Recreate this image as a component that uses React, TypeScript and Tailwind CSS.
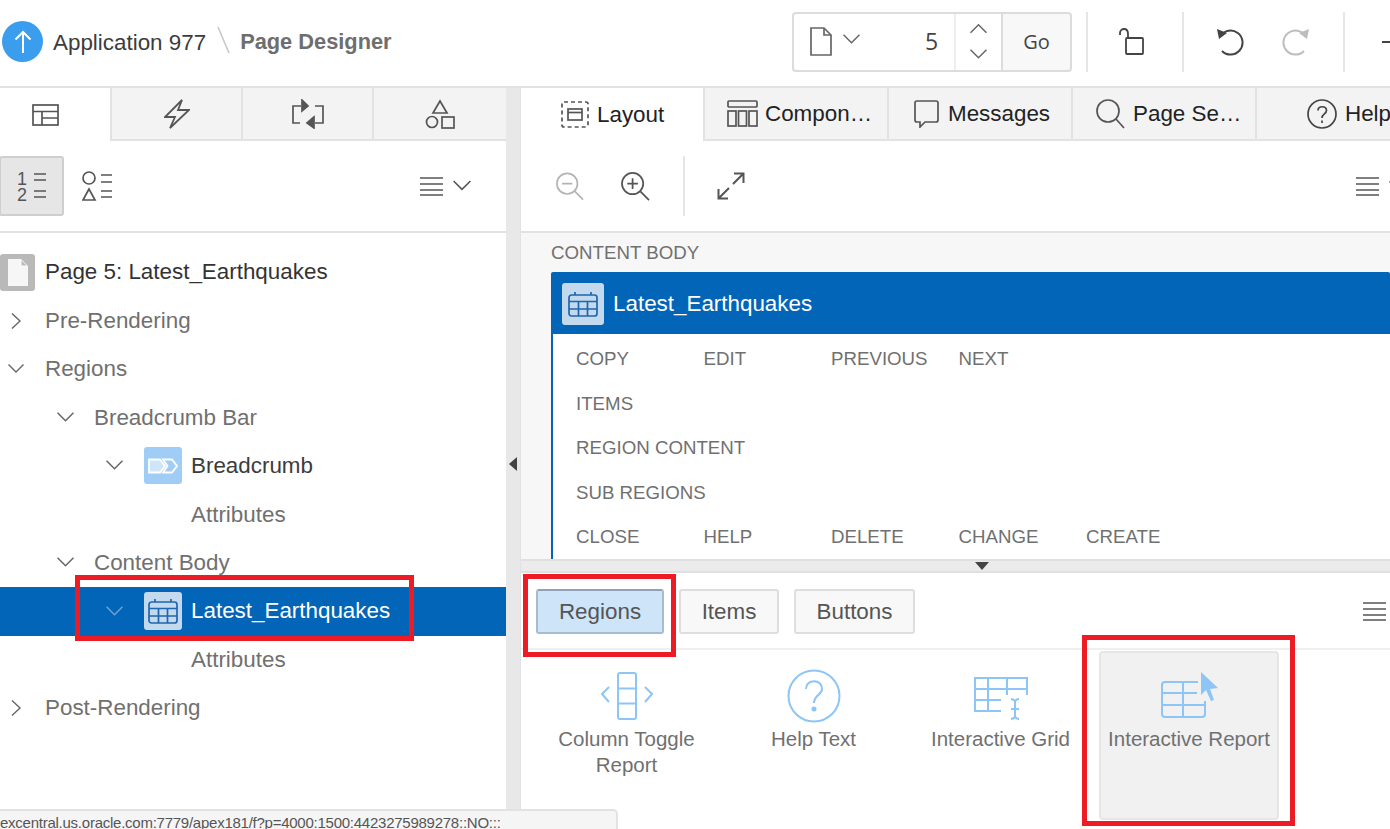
import React from 'react';

const Chev = ({ dir = 'down', c = '#666', s = 16, w = 1.4 }: { dir?: 'down' | 'up' | 'right'; c?: string; s?: number; w?: number }) => {
  const d = dir === 'down' ? 'M0.5 3.5 L8 11 L15.5 3.5' : dir === 'up' ? 'M0.5 11 L8 3.5 L15.5 11' : 'M4 0.5 L12 8 L4 15.5';
  return (
    <svg width={s} height={s} viewBox="0 0 16 16" fill="none" stroke={c} strokeWidth={w} className="block shrink-0">
      <path d={d} />
    </svg>
  );
};

const Burger = ({ w = 23 }: { w?: number }) => (
  <svg width={w} height="19" viewBox={`0 0 ${w} 19`} stroke="#555" strokeWidth="1.6" className="block shrink-0">
    <path d={`M0 1H${w}M0 7H${w}M0 13H${w}M0 18H${w}`} />
  </svg>
);

const CalendarGlyph = () => (
  <svg width="32" height="26" viewBox="0 0 32 26" fill="none" stroke="#1f65b0" strokeWidth="1.7">
    <rect x="2" y="4" width="28" height="21" rx="2.5" />
    <path d="M2 10.5H30M2 18H30M11.5 10.5V25M20.5 10.5V25M8 1V4M24 1V4" />
  </svg>
);

const BreadcrumbIcon = () => (
  <div className="flex h-[37px] w-[38px] shrink-0 items-center justify-center rounded-[3px] bg-[#9fcdf5]">
    <svg width="30" height="16" viewBox="0 0 30 16" fill="none" stroke="#fff" strokeWidth="1.8">
      <path d="M1 1.5H12L17 8L12 14.5H1Z" fill="#cfe6fa" />
      <path d="M15 1.5H24L29 8L24 14.5H15L19.5 8Z" />
    </svg>
  </div>
);

const PageGlyph = () => (
  <div className="flex h-[37px] w-[35px] shrink-0 items-center justify-center rounded-[3px] bg-[#b9b9b9]">
    <svg width="20" height="27" viewBox="0 0 20 27">
      <path d="M0 0H13L20 7V27H0Z" fill="#f6f6f6" />
      <path d="M13 1V7H19" fill="#b9b9b9" stroke="#fff" strokeWidth="1" />
    </svg>
  </div>
);

function TreeRow({
  indent,
  chev,
  chevW = 37,
  chevS = 16,
  icon,
  text,
  dark,
  selected,
}: {
  indent: number;
  chev?: 'down' | 'right';
  chevW?: number;
  chevS?: number;
  icon?: React.ReactNode;
  text: string;
  dark?: boolean;
  selected?: boolean;
}) {
  return (
    <div className={`flex h-[48.45px] items-center ${selected ? 'bg-[#0365b8] text-white' : dark ? 'text-[#3c3c3c]' : 'text-[#707070]'}`} style={{ paddingLeft: indent }}>
      <span className="flex shrink-0 items-center" style={{ width: chevW }}>
        {chev ? <Chev dir={chev} c={selected ? '#6fa3d4' : '#666'} s={chevS} /> : null}
      </span>
      {icon ? <span className="mr-[9px] block shrink-0">{icon}</span> : null}
      <span className="whitespace-nowrap">{text}</span>
    </div>
  );
}

const LeftTab = ({ w, active, children }: { w: string; active?: boolean; children: React.ReactNode }) => (
  <div className={`flex h-[53px] shrink-0 items-center justify-center border-[#e2e2e2] ${w} ${active ? 'border-r-2 bg-white' : 'border-b-2 border-r-2 bg-[#f3f3f3]'}`}>{children}</div>
);

const RightTab = ({ w, active, icon, label }: { w: string; active?: boolean; icon: React.ReactNode; label: string }) => (
  <div className={`flex h-[53px] shrink-0 items-center gap-[9px] border-r-2 border-[#e2e2e2] text-[#222] ${w} ${active ? 'bg-white' : 'border-b-2 bg-[#f3f3f3]'}`}>
    {icon}
    <span className="whitespace-nowrap">{label}</span>
  </div>
);

const Cell = ({ t }: { t: string }) => <span className="w-[127.5px] shrink-0 whitespace-nowrap">{t}</span>;
const LayoutRow = ({ items }: { items: string[] }) => (
  <div className="flex h-[44.5px] items-center">
    {items.map((t) => (
      <Cell key={t} t={t} />
    ))}
  </div>
);

const GalleryItem = ({ icon, label, w, extra = '' }: { icon: React.ReactNode; label: React.ReactNode; w: string; extra?: string }) => (
  <div className={`flex shrink-0 flex-col items-center ${w} ${extra}`}>
    <div className="flex h-[75px] items-end pb-[1px]">{icon}</div>
    <div className="mt-[1px] text-center leading-[26px] text-[#707070]">{label}</div>
  </div>
);

const RedBox = ({ cls }: { cls: string }) => <div className={`pointer-events-none absolute border-[5px] border-[#ed1c24] ${cls}`} />;

export default function App() {
  return (
    <div className="relative h-[829px] w-[1390px] overflow-hidden bg-white font-['Liberation_Sans',Arial,sans-serif] text-[22.4px]">
      {/* Header */}
      <header className="flex h-[88px] items-center border-b-2 border-[#e2e2e2] bg-white pb-[3px]">
        <div className="flex w-[792px] shrink-0 items-center">
          <div className="ml-[2px] flex h-[41px] w-[41px] shrink-0 items-center justify-center rounded-full bg-[#3a9dee]">
            <svg width="20" height="24" viewBox="0 0 20 24" fill="none" stroke="#fff" strokeWidth="2">
              <path d="M10 23V2M2.5 9.5L10 2L17.5 9.5" />
            </svg>
          </div>
          <span className="ml-[10px] mt-[2px] whitespace-nowrap text-[#3c3c3c]">Application 977</span>
          <svg width="14" height="28" viewBox="0 0 14 28" className="ml-[11px] mb-[3px] shrink-0" stroke="#c8c8c8" strokeWidth="1.6">
            <path d="M1 1L12 27" />
          </svg>
          <span className="ml-[9px] mt-[2px] whitespace-nowrap text-[21.8px] font-bold text-[#6e6e6e]">Page Designer</span>
        </div>

        <div className="flex h-[60px] w-[280px] shrink-0 items-stretch">
          <div className="flex w-[209px] items-center rounded-l-[4px] border-2 border-r-0 border-[#dcdcdc] bg-white">
            <svg width="22" height="29" viewBox="0 0 22 29" fill="none" stroke="#666" strokeWidth="1.7" className="ml-[16px] shrink-0">
              <path d="M1 1H14L21 8V28H1Z" />
              <path d="M14 1V8H21" />
            </svg>
            <span className="ml-[11px] mb-[4px]"><Chev c="#666" s={17} /></span>
            <span className="ml-[65px] font-['Open_Sans',sans-serif] text-[23px] text-[#444]">5</span>
            <div className="ml-[16px] flex h-full w-[46px] flex-col items-center justify-center gap-[8px] border-l-2 border-[#eeeeee]">
              <Chev dir="up" c="#666" s={17} />
              <Chev c="#666" s={17} />
            </div>
          </div>
          <div className="flex w-[71px] items-center justify-center rounded-r-[4px] border-2 border-[#dcdcdc] bg-[#f8f8f8] font-['Open_Sans',sans-serif] text-[20px] text-[#444]">Go</div>
        </div>

        <div className="ml-[14px] h-[60px] w-[2px] shrink-0 bg-[#e6e6e6]" />
        <svg width="26" height="27" viewBox="0 0 26 27" fill="none" stroke="#444" strokeWidth="1.8" className="ml-[31px] shrink-0">
          <path d="M1 7V5C1 2.5 3 1 5 1C7.5 1 9 3 9 6V9" />
          <rect x="7" y="10" width="17" height="16" rx="1" />
        </svg>
        <div className="ml-[37px] h-[60px] w-[2px] shrink-0 bg-[#e6e6e6]" />
        <svg width="28" height="28" viewBox="0 0 28 28" fill="none" stroke="#444" strokeWidth="2" className="ml-[32px] shrink-0">
          <path d="M4.5 8A12 12 0 1 1 6 23" />
          <path d="M1 1L11 5L3 11Z" fill="#444" stroke="none" />
        </svg>
        <svg width="28" height="28" viewBox="0 0 28 28" fill="none" stroke="#bdbdbd" strokeWidth="2" className="ml-[38px] shrink-0">
          <path d="M23.5 8A12 12 0 1 0 22 23" />
          <path d="M27 1L17 5L25 11Z" fill="#bdbdbd" stroke="none" />
        </svg>
        <div className="ml-[33px] h-[60px] w-[2px] shrink-0 bg-[#e6e6e6]" />
        <div className="ml-[37px] h-[2px] w-[8px] shrink-0 bg-[#444]" />
      </header>

      <div className="flex h-[741px]">
        {/* Left panel */}
        <aside className="flex w-[506px] shrink-0 flex-col">
          <div className="flex">
            <LeftTab w="w-[112px] pr-[19px]" active>
              <svg width="27" height="22" viewBox="0 0 27 22" fill="none" stroke="#555" strokeWidth="1.7">
                <rect x="1" y="1" width="25" height="20" />
                <path d="M1 7.5H26M10 7.5V21M10 14H26" />
              </svg>
            </LeftTab>
            <LeftTab w="w-[131px]">
              <svg width="26" height="30" viewBox="0 0 26 30" fill="none" stroke="#555" strokeWidth="1.8" strokeLinejoin="miter">
                <path d="M18 1L1 18H11L6 29L25 11H14Z" />
              </svg>
            </LeftTab>
            <LeftTab w="w-[131px]">
              <svg width="32" height="30" viewBox="0 0 32 30" fill="none" stroke="#555" strokeWidth="1.7">
                <path d="M9 7H1V24H8M23 7H31V24H23" />
                <path d="M10 1L16 7L10 12Z" fill="#555" />
                <path d="M22 18L15 24L22 29Z" fill="#555" />
              </svg>
            </LeftTab>
            <LeftTab w="w-[132px] !border-r-0">
              <svg width="30" height="30" viewBox="0 0 30 30" fill="none" stroke="#555" strokeWidth="1.7">
                <path d="M15 2L22 14H8Z" />
                <circle cx="7" cy="23" r="5.5" />
                <rect x="17" y="18" width="12" height="11" />
              </svg>
            </LeftTab>
          </div>

          <div className="flex h-[92px] items-center border-b-2 border-[#e2e2e2]">
            <div className="ml-[-1px] flex h-[60px] w-[65px] shrink-0 items-center justify-center rounded-[3px] border-2 border-[#cfcfcf] bg-[#e6e6e6]">
              <svg width="30" height="31" viewBox="0 0 30 31" fill="#555" stroke="#555" strokeWidth="1.6">
                <text x="0" y="14" fontSize="18" stroke="none">1</text>
                <text x="0" y="30" fontSize="18" stroke="none">2</text>
                <path d="M17 3H29M17 9H29M17 20H29M17 26H29" fill="none" />
              </svg>
            </div>
            <svg width="31" height="30" viewBox="0 0 31 30" fill="none" stroke="#555" strokeWidth="1.7" className="ml-[18px] shrink-0">
              <circle cx="7" cy="7" r="6" />
              <path d="M7 18L1 29H13Z" />
              <path d="M19 4H30M19 11H30M19 20H30M19 26H30" />
            </svg>
            <span className="ml-[307px] block"><Burger /></span>
            <span className="ml-[10px] block"><Chev c="#555" s={18} /></span>
          </div>

          <div className="flex-1 pt-[15px]">
            <div className="flex h-[48.45px] items-center text-[#333]">
              <PageGlyph />
              <span className="ml-[10px] whitespace-nowrap">Page 5: Latest_Earthquakes</span>
            </div>
            <TreeRow indent={8} chev="right" text="Pre-Rendering" />
            <TreeRow indent={8} chev="down" text="Regions" />
            <TreeRow indent={57} chev="down" chevS={17} text="Breadcrumb Bar" />
            <TreeRow indent={106} chev="down" chevS={17} chevW={38} icon={<BreadcrumbIcon />} text="Breadcrumb" dark />
            <TreeRow indent={154} text="Attributes" />
            <TreeRow indent={57} chev="down" chevS={17} text="Content Body" />
            <TreeRow
              indent={106}
              chev="down"
              chevS={17}
              chevW={38}
              icon={
                <div className="flex h-[38px] w-[38px] shrink-0 items-center justify-center rounded-[3px] bg-[#c3d9ee]">
                  <CalendarGlyph />
                </div>
              }
              text="Latest_Earthquakes"
              selected
            />
            <TreeRow indent={154} text="Attributes" />
            <TreeRow indent={8} chev="right" text="Post-Rendering" />
          </div>
        </aside>

        {/* Vertical splitter */}
        <div className="flex w-[14px] shrink-0 items-start justify-center bg-[#e8e8e8] pt-[369px]">
          <div className="h-0 w-0 border-y-[7px] border-r-[8px] border-y-transparent border-r-[#444]" />
        </div>

        {/* Right panel */}
        <main className="flex min-w-0 flex-1 flex-col border-l border-[#e2e2e2]">
          <div className="flex">
            <RightTab
              w="w-[184px] !gap-[8px] pl-[40px]"
              active
              label="Layout"
              icon={
                <svg width="28" height="27" viewBox="0 0 28 27" fill="none" stroke="#555" strokeWidth="1.7" className="shrink-0">
                  <rect x="1" y="1" width="26" height="25" rx="2" strokeDasharray="4 3" />
                  <rect x="7" y="8" width="14" height="11" />
                  <path d="M7 11.5H21" />
                </svg>
              }
            />
            <RightTab
              w="w-[184px] !gap-[7px] pl-[22px]"
              label="Compon…"
              icon={
                <svg width="31" height="27" viewBox="0 0 31 27" fill="none" stroke="#555" strokeWidth="1.7" className="shrink-0">
                  <rect x="1" y="1" width="29" height="6" rx="1" />
                  <rect x="1" y="11" width="8" height="15" />
                  <rect x="11.5" y="11" width="8" height="15" />
                  <rect x="22" y="11" width="8" height="15" />
                </svg>
              }
            />
            <RightTab
              w="w-[184px] pl-[25px]"
              label="Messages"
              icon={
                <svg width="25" height="28" viewBox="0 0 25 28" fill="none" stroke="#555" strokeWidth="1.7" className="shrink-0">
                  <path d="M3 1H22C23 1 24 2 24 3V20C24 21 23 22 22 22H11L6 27V22H3C2 22 1 21 1 20V3C1 2 2 1 3 1Z" />
                </svg>
              }
            />
            <RightTab
              w="w-[184px] !gap-[8px] pl-[23px]"
              label="Page Se…"
              icon={
                <svg width="29" height="30" viewBox="0 0 29 30" fill="none" stroke="#555" strokeWidth="1.7" className="shrink-0">
                  <circle cx="12" cy="12" r="11" />
                  <path d="M20 20L28 29" />
                </svg>
              }
            />
            <div className="flex h-[53px] flex-1 items-center gap-[8px] overflow-hidden border-b-2 border-[#e2e2e2] bg-[#f3f3f3] pl-[50px] text-[#222]">
              <svg width="30" height="30" viewBox="0 0 30 30" fill="none" stroke="#444" strokeWidth="1.7" className="shrink-0">
                <circle cx="15" cy="15" r="14" />
                <path d="M11 11.5C11 6.5 19.5 6.5 19.5 11.5C19.5 15 15 15 15 19" />
                <path d="M15 21.5V24" />
              </svg>
              <span className="whitespace-nowrap">Help</span>
            </div>
          </div>

          <div className="flex h-[92px] shrink-0 items-center border-b-2 border-[#e2e2e2]">
            <svg width="28" height="29" viewBox="0 0 30 30" fill="none" stroke="#b4b4b4" strokeWidth="1.8" className="ml-[35px] shrink-0">
              <circle cx="12" cy="12" r="11" />
              <path d="M6.5 12H17.5M20 20L29 29" />
            </svg>
            <svg width="29" height="29" viewBox="0 0 30 30" fill="none" stroke="#555" strokeWidth="1.8" className="ml-[37px] shrink-0">
              <circle cx="12" cy="12" r="11" />
              <path d="M6.5 12H17.5M12 6.5V17.5M20 20L29 29" />
            </svg>
            <div className="ml-[33px] h-[60px] w-[2px] shrink-0 bg-[#e6e6e6]" />
            <svg width="28" height="28" viewBox="0 0 28 28" fill="none" stroke="#555" strokeWidth="2" className="ml-[32px] shrink-0">
              <path d="M17 1.5H26.5V11M26.5 1.5L16 12M1.5 17V26.5H11M1.5 26.5L12 16" />
            </svg>
            <span className="ml-[611px] block"><Burger /></span>
            <span className="ml-[10px] block"><Chev c="#555" s={16} /></span>
          </div>

          {/* Layout canvas */}
          <div className="flex h-[326px] shrink-0 flex-col overflow-hidden bg-[#f7f7f7] pl-[30px]">
            <div className="flex h-[39px] shrink-0 items-center pt-[1px] text-[18.7px] text-[#707070]">CONTENT BODY</div>
            <div className="flex h-[62px] shrink-0 items-center rounded-t-[2px] bg-[#0365b8] pl-[11px] pt-[2px] text-white">
              <div className="flex h-[42px] w-[42px] shrink-0 items-center justify-center rounded-[3px] bg-[#c3d9ee]">
                <CalendarGlyph />
              </div>
              <span className="ml-[9px] whitespace-nowrap">Latest_Earthquakes</span>
            </div>
            <div className="min-h-0 flex-1 border-l-2 border-[#0365b8] bg-white pl-[23px] pt-[3px] text-[18.7px] text-[#707070]">
              <LayoutRow items={['COPY', 'EDIT', 'PREVIOUS', 'NEXT']} />
              <LayoutRow items={['ITEMS']} />
              <LayoutRow items={['REGION CONTENT']} />
              <LayoutRow items={['SUB REGIONS']} />
              <LayoutRow items={['CLOSE', 'HELP', 'DELETE', 'CHANGE', 'CREATE']} />
            </div>
          </div>

          {/* Horizontal splitter */}
          <div className="flex h-[14px] shrink-0 justify-center border-y-2 border-[#e0e0e0] bg-[#ebebeb] pl-[52px] pt-[1px]">
            <div className="h-0 w-0 border-x-[7.5px] border-t-[8px] border-x-transparent border-t-[#444]" />
          </div>

          {/* Gallery tabs */}
          <div className="flex h-[77px] shrink-0 items-start border-b-2 border-[#f0f0f0] pl-[15px] pt-[16px] text-[#555]">
            <div className="flex h-[45px] w-[128px] shrink-0 items-center justify-center rounded-[3px] border-2 border-[#a9bccd] border-t-[#8ea2b5] bg-[#cde4f9]">Regions</div>
            <div className="ml-[15px] flex h-[45px] w-[100px] shrink-0 items-center justify-center rounded-[3px] border-2 border-[#dedede] bg-[#f8f8f8]">Items</div>
            <div className="ml-[15px] flex h-[45px] w-[121px] shrink-0 items-center justify-center rounded-[3px] border-2 border-[#dedede] bg-[#f8f8f8]">Buttons</div>
            <span className="ml-[448px] mt-[13px] block"><Burger /></span>
          </div>

          {/* Gallery */}
          <div className="flex flex-1 items-start pl-[12px] text-[20.5px]">
            <GalleryItem
              w="w-[187px]"
              label={<>Column Toggle<br />Report</>}
              icon={
                <svg width="54" height="48" viewBox="0 0 54 48" fill="none" stroke="#8cc5f6" strokeWidth="2" className="mb-[4px]">
                  <rect x="18" y="1" width="18" height="46" rx="2" />
                  <path d="M18 16.5H36M18 31.5H36M9 15L2 22L9 30M45 15L52 22L45 30" />
                </svg>
              }
            />
            <GalleryItem
              w="w-[187px]"
              label="Help Text"
              icon={
                <svg width="54" height="54" viewBox="0 0 54 54" fill="none" stroke="#8cc5f6" strokeWidth="2" className="mb-[1px]">
                  <circle cx="27" cy="27" r="25.5" />
                  <path d="M19 20C19 9.5 35 9.5 35 20C35 26 27 26 27 34" />
                  <circle cx="27" cy="40" r="1.5" fill="#8cc5f6" />
                </svg>
              }
            />
            <GalleryItem
              w="w-[187px]"
              label="Interactive Grid"
              icon={
                <svg width="54" height="44" viewBox="0 0 54 44" fill="none" stroke="#8cc5f6" strokeWidth="2" className="mb-[4px]">
                  <path d="M27 35H1V2H53V19M1 13H53M1 24H27M14 2V35M33 2V19" />
                  <path d="M37 23C39 23 40 24 41 25C42 24 43 23 45 23M41 25V41M37 33H45M37 43C39 43 40 42 41 41C42 42 43 43 45 43" />
                </svg>
              }
            />
            <div className="ml-[5px] mt-[1px] h-[169px] w-[180px] shrink-0 rounded-[4px] border-2 border-[#e6e6e6] bg-[#f1f1f1]">
              <GalleryItem
                w="w-full"
                extra="mt-[-3px]"
                label="Interactive Report"
                icon={
                  <svg width="58" height="48" viewBox="0 0 58 48" fill="none" stroke="#8cc5f6" strokeWidth="2" className="ml-[2px] mb-[5px]">
                    <path d="M37 11H4C2 11 1 12 1 14V43C1 45 2 46 4 46H41C43 46 44 45 44 43V30M1 22H36M1 34H44M22 11V46" />
                    <path d="M40 1L57 17L49 18L53 29L50 30L45 19L40 24Z" fill="#8cc5f6" stroke="none" />
                  </svg>
                }
              />
            </div>
          </div>
        </main>
      </div>

      {/* Browser status bubble */}
      <div className="absolute bottom-0 left-0 h-[20px] w-[618px] overflow-hidden whitespace-nowrap rounded-tr-[5px] border-r-2 border-t-2 border-[#e2e2e2] bg-[#f5f5f5] text-[15px] leading-[24px] tracking-[-0.25px] text-[#555]">
        excentral.us.oracle.com:7779/apex181/f?p=4000:1500:4423275989278::NO:::
      </div>

      {/* Annotation boxes */}
      <RedBox cls="left-[75px] top-[575px] h-[66px] w-[339px]" />
      <RedBox cls="left-[523px] top-[574px] h-[83px] w-[153px]" />
      <RedBox cls="left-[1082px] top-[635px] h-[191px] w-[213px]" />
    </div>
  );
}
